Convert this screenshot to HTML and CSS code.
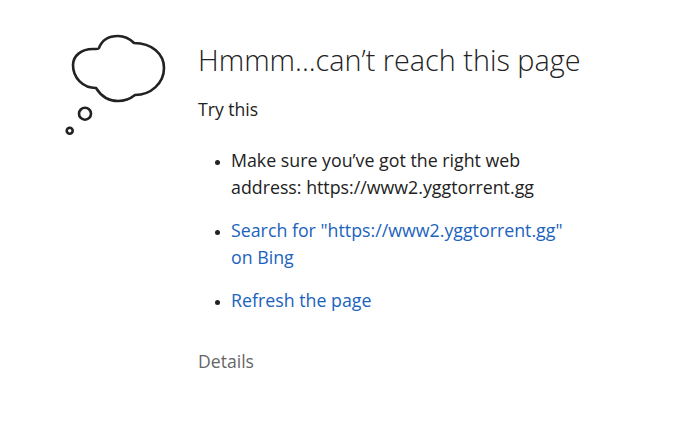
FILE: index.html
```html
<!DOCTYPE html>
<html lang="en">
<head>
  <meta charset="UTF-8" />
  <title>Can't reach this page</title>
  <link rel="stylesheet" href="styles.css">
</head>
<body>

  <div class="page">
    <svg class="cloud" width="110" height="100" viewBox="0 0 110 100" fill="none" stroke="#222" stroke-width="2.6">
      <path d="M49 19C52 11 59 7 68 7C75 7 80 10 84 14C102 14 114 25 114 39C114 54 101 66 85 66C80 70 75 72 68 72C59 72 51 67 46 59C33 59 23 49 23 36C23 27 31 20 43 20L46 20Q48.5 20 49 19Z"/>
      <circle cx="35" cy="84.7" r="6"/>
      <circle cx="19.7" cy="101.7" r="3"/>
    </svg>

    <div class="content">
      <h1>Hmmm...can’t reach this page</h1>
      <p class="try">Try this</p>
      <ul class="tips">
        <li>Make sure you’ve got the right web address: https://www2.yggtorrent.gg</li>
        <li><a href="#">Search for "https://www2.yggtorrent.gg" on Bing</a></li>
        <li><a href="#">Refresh the page</a></li>
      </ul>
      <a class="details" href="#">Details</a>
    </div>
  </div>

</body>
</html>
```

FILE: styles.css
```css
body {
  margin: 0;
  font-family: "Open Sans", "Noto Sans", sans-serif;
  background-color: #fff;
  color: #222;
}
.page {
  display: flex;
  padding: 29px 0 0 50px;
}
.cloud {
  flex: none;
  overflow: visible;
  margin-right: 38px;
}
.content {
  width: 440px;
  padding-top: 10px;
}
h1 {
  margin: 0;
  font-size: 28.8px;
  font-weight: 300;
  line-height: 42px;
}
.try {
  margin: 15px 0 0;
  font-size: 17.6px;
  line-height: 27px;
}
.tips {
  width: 342px;
  margin: 24px 0 0;
  padding: 0 0 0 33px;
  font-size: 17.8px;
  line-height: 27px;
}
.tips li {
  margin-bottom: 16px;
}
.tips li::marker {
  font-size: 13px;
  color: #222;
}
a {
  color: #1b63bd;
  text-decoration: none;
}
.details {
  display: block;
  margin-top: 34px;
  font-size: 17.6px;
  line-height: 27px;
  color: #666;
}
```
